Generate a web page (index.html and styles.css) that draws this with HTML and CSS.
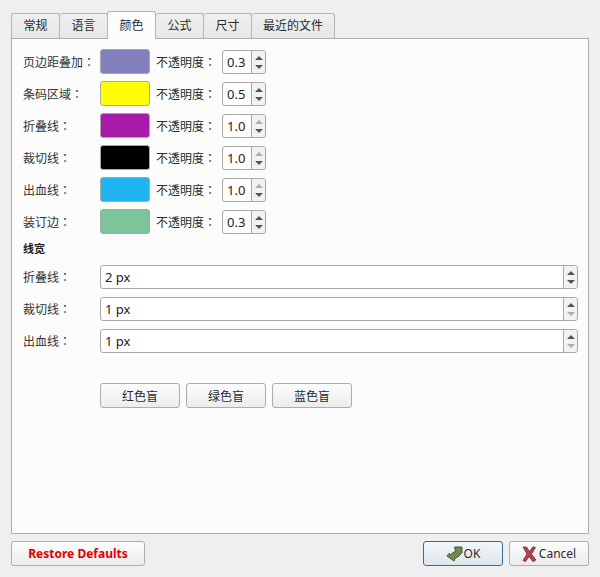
FILE: index.html
```html
<!DOCTYPE html>
<html lang="ja">
<head>
<meta charset="utf-8">
<title>颜色</title>
<link rel="stylesheet" href="styles.css">
</head>
<body>
<div class="dialog">
  <div class="tabs">
    <div class="tab first">常规</div>
    <div class="tab">语言</div>
    <div class="tab active">颜色</div>
    <div class="tab">公式</div>
    <div class="tab">尺寸</div>
    <div class="tab last">最近的文件</div>
  </div>
  <div class="pane">
    <div class="colors">
      <div class="row">
        <span class="label">页边距叠加：</span><span class="swatch purple"></span><span class="op">不透明度：</span>
        <span class="spin small"><span class="val">0.3</span><span class="arrows"><span class="up"></span><span class="down"></span></span></span>
      </div>
      <div class="row">
        <span class="label">条码区域：</span><span class="swatch yellow"></span><span class="op">不透明度：</span>
        <span class="spin small"><span class="val">0.5</span><span class="arrows"><span class="up"></span><span class="down"></span></span></span>
      </div>
      <div class="row">
        <span class="label">折叠线：</span><span class="swatch magenta"></span><span class="op">不透明度：</span>
        <span class="spin small"><span class="val">1.0</span><span class="arrows"><span class="up off"></span><span class="down"></span></span></span>
      </div>
      <div class="row">
        <span class="label">裁切线：</span><span class="swatch black"></span><span class="op">不透明度：</span>
        <span class="spin small"><span class="val">1.0</span><span class="arrows"><span class="up off"></span><span class="down"></span></span></span>
      </div>
      <div class="row">
        <span class="label">出血线：</span><span class="swatch blue"></span><span class="op">不透明度：</span>
        <span class="spin small"><span class="val">1.0</span><span class="arrows"><span class="up off"></span><span class="down"></span></span></span>
      </div>
      <div class="row">
        <span class="label">装订边：</span><span class="swatch green"></span><span class="op">不透明度：</span>
        <span class="spin small"><span class="val">0.3</span><span class="arrows"><span class="up"></span><span class="down"></span></span></span>
      </div>
    </div>
    <div class="heading">线宽</div>
    <div class="widths">
      <div class="row wrow">
        <span class="label">折叠线：</span>
        <span class="spin wide"><span class="val">2 px</span><span class="arrows"><span class="up"></span><span class="down"></span></span></span>
      </div>
      <div class="row wrow">
        <span class="label">裁切线：</span>
        <span class="spin wide"><span class="val">1 px</span><span class="arrows"><span class="up"></span><span class="down off"></span></span></span>
      </div>
      <div class="row wrow">
        <span class="label">出血线：</span>
        <span class="spin wide"><span class="val">1 px</span><span class="arrows"><span class="up"></span><span class="down off"></span></span></span>
      </div>
    </div>
    <div class="blind">
      <button class="btn w80">红色盲</button>
      <button class="btn w80">绿色盲</button>
      <button class="btn w80">蓝色盲</button>
    </div>
  </div>
  <div class="footer">
    <button class="btn restore">Restore Defaults</button>
    <div class="right">
      <button class="btn w80 ok">
        <svg class="icon" width="17" height="16" viewBox="0 0 17 16"><path d="M8.5 1 L16 1 L16 6.5 L13 10 L9 12.5 L8 15 L1 10 L3 7.5 L4.5 8.5 L9.5 5 Z" fill="#6f8a4e" stroke="#465a30" stroke-width="1" stroke-linejoin="round"/></svg>OK
      </button>
      <button class="btn w80 cancel">
        <svg class="icon" width="15" height="16" viewBox="0 0 15 16"><path d="M1 1 L4.5 1 L7.5 5.5 L11 .8 L13.5 1.5 L9.5 8 L14 14 L10.8 15.5 L7 10.5 L3.5 15.5 L1 14.5 L5 8 Z" fill="#b5434c" stroke="#6d2a30" stroke-width=".8" stroke-linejoin="round"/></svg>Cancel
      </button>
    </div>
  </div>
</div>
</body>
</html>
```
FILE: styles.css
```css
* { box-sizing: border-box; }
html, body { margin: 0; padding: 0; }
body {
  width: 600px;
  height: 577px;
  background: #efefef;
  color: #2a2a2a;
  font-family: "Noto Sans", "Noto Sans CJK JP", sans-serif;
  font-size: 12px;
  overflow: hidden;
}
.dialog { padding: 11px 11px 0; }
.tabs { display: flex; height: 28px; align-items: flex-end; position: relative; z-index: 1; margin-bottom: -1px; }
.tab {
  width: 48px;
  height: 25px;
  margin-bottom: 1px;
  border: 1px solid #b4b4b4;
  border-left-width: 0;
  border-bottom: 0;
  border-radius: 3px 3px 0 0;
  background: linear-gradient(#f0f0f0, #e6e6e6);
  display: flex;
  align-items: center;
  justify-content: center;
  font-size: 12px;
  line-height: 14px;
}
.tab.first { width: 49px; border-left-width: 1px; }
.tab.last { width: 83px; }
.tab.active {
  width: 49px;
  height: 28px;
  margin-bottom: 0;
  background: #fcfcfc;
  border-left-width: 1px;
  margin-left: -1px;
}
.pane {
  width: 578px;
  height: 496px;
  background: #fcfcfc;
  border: 1px solid #aeaeae;
  padding: 10px 10px 0 11px;
}
.colors { display: flex; flex-direction: column; gap: 7px; }
.widths { display: flex; flex-direction: column; gap: 8px; }
.row { display: flex; align-items: center; height: 25px; }
.wrow { height: 24px; }
.label { width: 77px; flex: none; font-size: 12px; white-space: nowrap; color: #333; }
.swatch { width: 50px; height: 25px; flex: none; border: 1px solid #a8a8a8; border-radius: 3px; margin-right: 6px; }
.purple { background: #8380be; }
.yellow { background: #ffff00; }
.magenta { background: #a81aaa; }
.black { background: #000; }
.blue { background: #20b4f0; }
.green { background: #7cc49a; }
.op { width: 66px; flex: none; font-size: 12px; white-space: nowrap; }
.spin {
  display: flex;
  height: 24px;
  border: 1px solid #a8a8a8;
  border-radius: 3px;
  background: #fff;
  font-size: 13px;
  color: #222;
}
.small { width: 44px; align-self: flex-start; margin-top: 1px; }
.wide { width: 478px; }
.val { flex: 1; padding-left: 4px; line-height: 22px; }
.arrows { width: 14px; border-left: 1px solid #a8a8a8; background: #f2f2f2; display: flex; flex-direction: column; align-items: center; justify-content: center; gap: 5px; border-radius: 0 3px 3px 0; }
.up { width: 0; height: 0; border: 4px solid transparent; border-top: 0; border-bottom: 4px solid #555; }
.down { width: 0; height: 0; border: 4px solid transparent; border-bottom: 0; border-top: 4px solid #555; }
.up.off { border-bottom-color: #aaa; }
.down.off { border-top-color: #aaa; }
.heading { font-size: 11px; font-weight: bold; height: 16px; line-height: 16px; margin: 7px 0 8px; color: #222; }
.blind { display: flex; gap: 6px; margin: 30px 0 0 77px; }
.btn {
  height: 25px;
  border: 1px solid #adadad;
  border-radius: 3px;
  background: linear-gradient(#fcfcfc, #ececec);
  font-family: "Noto Sans", "Noto Sans CJK JP", sans-serif;
  font-size: 12px;
  color: #2a2a2a;
  padding: 0;
  display: flex;
  align-items: center;
  justify-content: center;
}
.w80 { width: 80px; }
.footer { display: flex; justify-content: space-between; margin-top: 7px; width: 578px; }
.right { display: flex; gap: 6px; }
.restore { width: 134px; color: #e00000; font-weight: bold; }
.ok { border-color: #2f6e9e; background: linear-gradient(#f2f6f9, #dde6ec); }
.icon { margin-right: 1px; flex: none; }
.cancel .icon { margin-right: 2px; }
```
